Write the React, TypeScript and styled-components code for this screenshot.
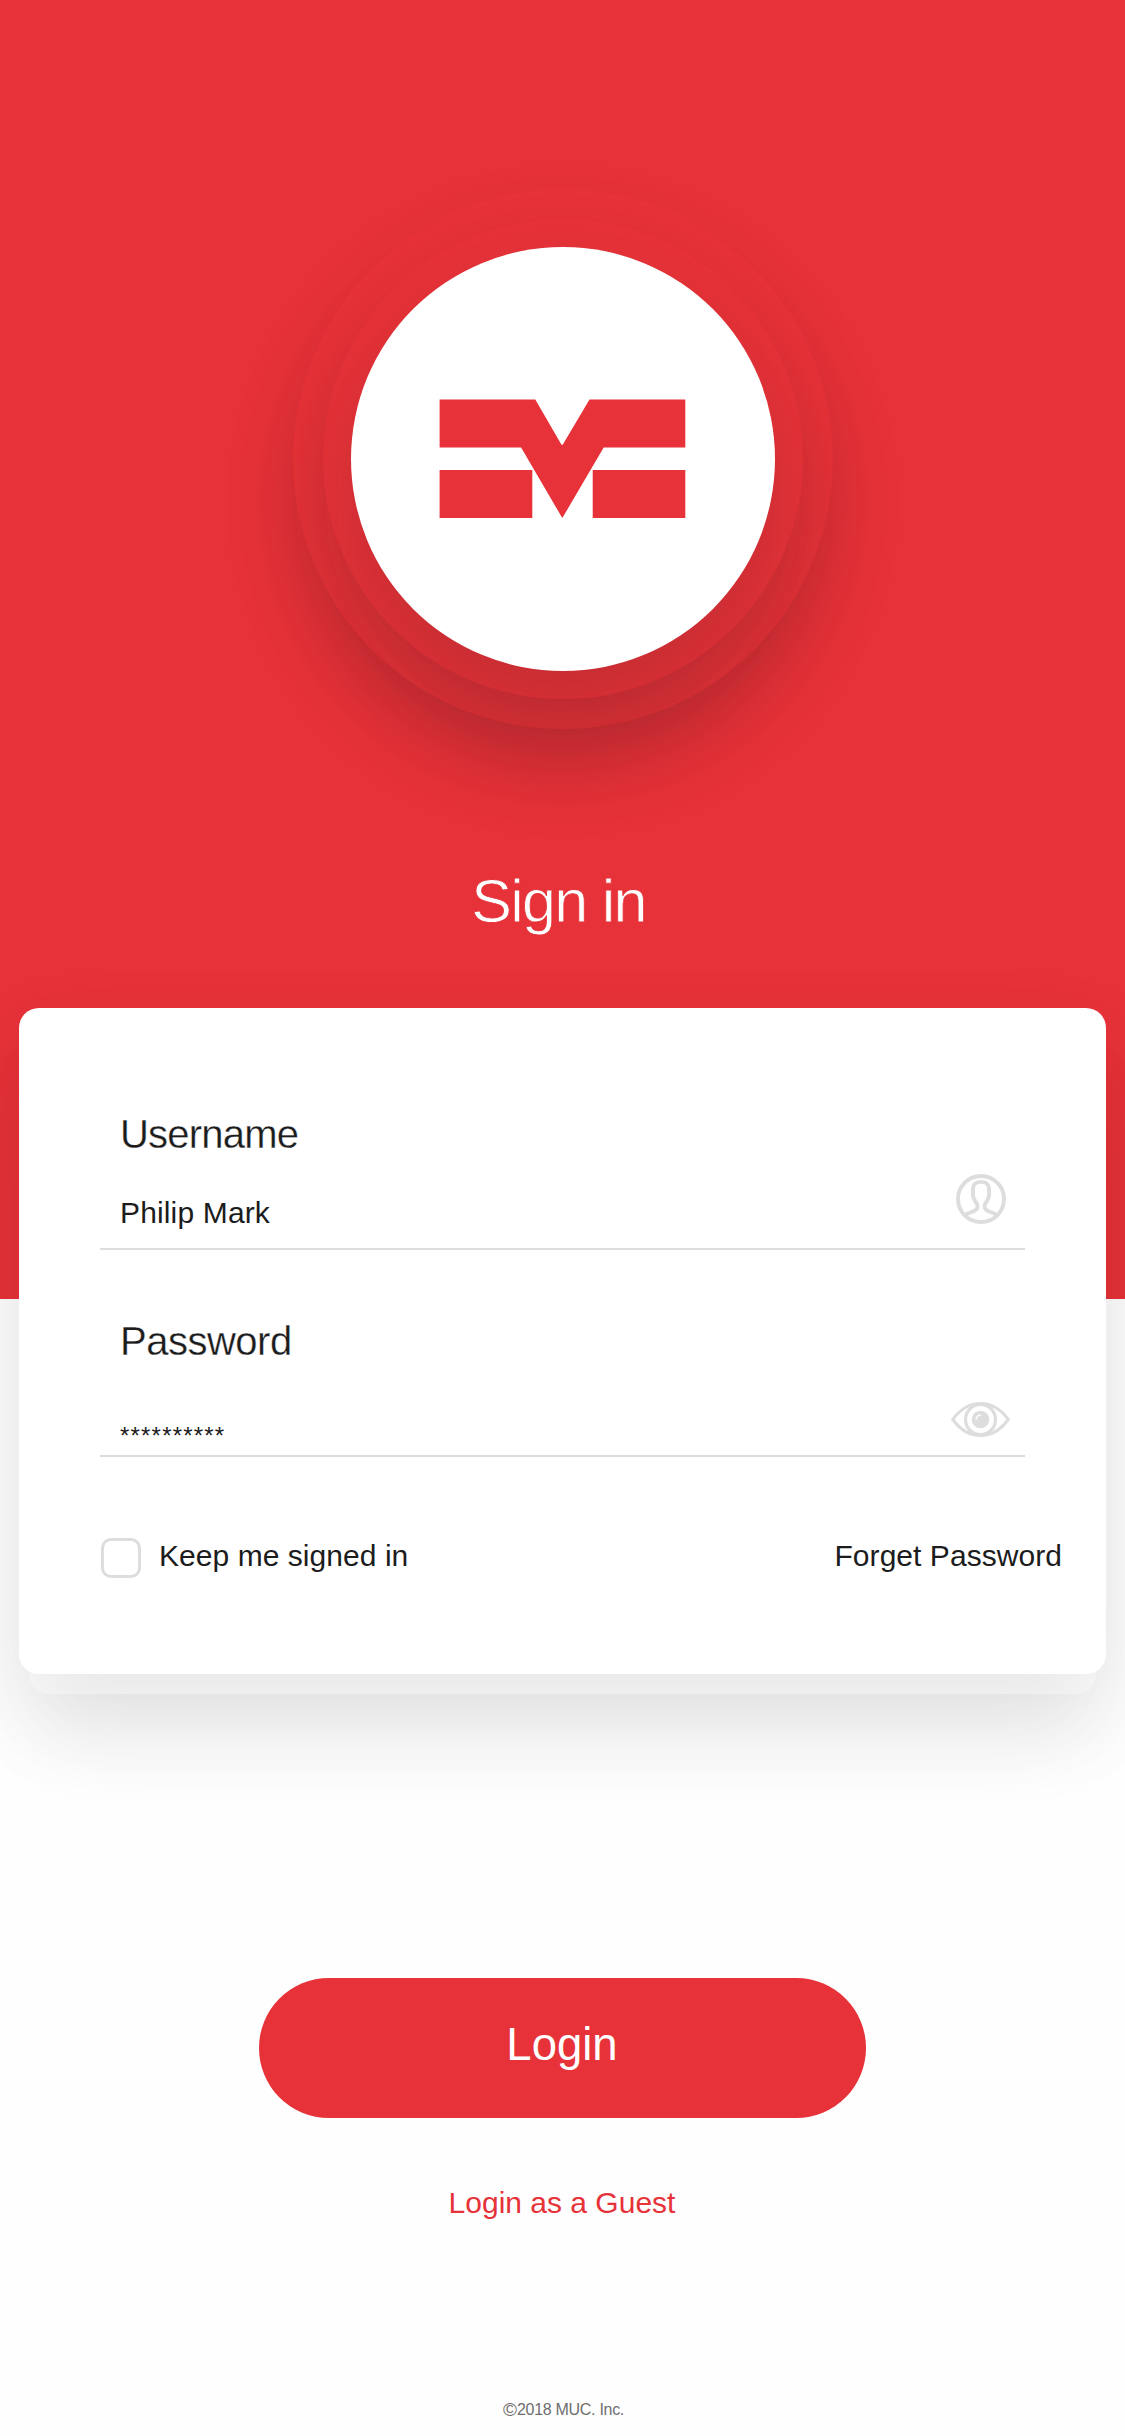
import React from 'react';
import styled, { createGlobalStyle } from 'styled-components';

const red = '#e63238';
const ink = '#1c1c1d';
const line = '#dddddd';

const GlobalStyle = createGlobalStyle`
  *, *::before, *::after { box-sizing: border-box; }
  html, body { margin: 0; padding: 0; background: #fefefe; }
  body { font-family: "Liberation Sans", Helvetica, Arial, sans-serif; color: ${ink}; }
  button { font-family: inherit; border: 0; padding: 0; background: none; cursor: pointer; }
`;

const Page = styled.main`
  width: 1125px;
  height: 2436px;
  margin: 0 auto;
  overflow: hidden;
  display: flex;
  flex-direction: column;
  align-items: center;
  background: #fefefe;
`;

const Hero = styled.header`
  width: 100%;
  height: 1299px;
  flex: none;
  padding-top: 189px;
  display: flex;
  flex-direction: column;
  align-items: center;
  background: ${red};
`;

const Ring = styled.div<{ $size: number; $fill: string; $shade: number }>`
  width: ${(p) => p.$size}px;
  height: ${(p) => p.$size}px;
  flex: none;
  display: grid;
  place-items: center;
  border-radius: 50%;
  background: ${(p) => p.$fill};
  box-shadow: 0 42px 80px rgba(16, 20, 26, ${(p) => p.$shade});
`;

const Title = styled.h1`
  margin: 137px 8px 0 0;
  font-size: 61px;
  line-height: 70px;
  font-weight: 400;
  letter-spacing: -1.7px;
  color: #fff;
  -webkit-text-stroke: 0.8px ${red};
`;

const Card = styled.section`
  position: relative;
  width: 1087px;
  height: 666px;
  flex: none;
  margin-top: -291px;
  padding: 102px 81px 0;
  border-radius: 20px;
  background: #fff;
  box-shadow: 0 40px 90px rgba(0, 0, 0, 0.095);
  z-index: 1;
`;

/* Second sheet peeking out from under the card */
const UnderSheet = styled.div`
  position: relative;
  width: 1067px;
  height: 666px;
  flex: none;
  margin-top: -646px;
  border-radius: 20px;
  background: #fefefe;
  box-shadow: 0 50px 90px rgba(0, 0, 0, 0.045);
`;

const Field = styled.div`
  height: 140px;
  margin-bottom: 67px;
  border-bottom: 2px solid ${line};
`;

const Label = styled.label<{ $spacing: number }>`
  display: block;
  padding-left: 20px;
  font-size: 40px;
  line-height: 48px;
  letter-spacing: ${(p) => p.$spacing}px;
  -webkit-text-stroke: 0.3px #fff;
`;

const ValueRow = styled.div`
  display: flex;
  justify-content: space-between;
  align-items: flex-start;
  padding-left: 20px;
`;

const Value = styled.span<{ $drop: number; $size: number; $spacing: number }>`
  margin-top: ${(p) => p.$drop}px;
  font-size: ${(p) => p.$size}px;
  line-height: 36px;
  letter-spacing: ${(p) => p.$spacing}px;
`;

const IconSlot = styled.span<{ $top: number; $right: number }>`
  display: flex;
  margin: ${(p) => p.$top}px ${(p) => p.$right}px 0 0;
  color: ${line};
`;

const Options = styled.div`
  display: flex;
  justify-content: space-between;
  align-items: flex-start;
  margin: 81px -37px 0 1px;
  font-size: 30px;
  line-height: 36px;
  letter-spacing: 0.05px;
`;

const Keep = styled.label`
  display: flex;
  gap: 18px;
`;

const Box = styled.span`
  width: 40px;
  height: 40px;
  border: 3px solid ${line};
  border-radius: 10px;
`;

const Forget = styled.a`
  color: inherit;
  text-decoration: none;
`;

const LoginButton = styled.button`
  width: 607px;
  height: 140px;
  flex: none;
  margin-top: 284px;
  padding: 0 1px 6px 0;
  border-radius: 70px;
  background: ${red};
  color: #fff;
  font-size: 45.5px;
  line-height: 54px;
`;

const Guest = styled.button`
  margin: 67px 1px 0 0;
  color: ${red};
  font-size: 30px;
  line-height: 36px;
`;

const Footer = styled.footer`
  display: flex;
  align-items: center;
  margin: 179px 0 0 2px;
  color: #6e6e6e;
  font-size: 16px;
  line-height: 20px;
  letter-spacing: -0.3px;
`;

const Mark = styled.span`
  font-size: 19px;
  letter-spacing: 0;
`;

const Logo = () => (
  <svg width="246" height="119" viewBox="0.7 0.9 246 119" overflow="visible" fill={red}>
    <path d="M.3.3H96L122.2 45.6H123.4L150.2.3H246V48.3H164.4L123 119 81.8 48.3H.3Z" />
    <path d="M.3 71H93V119H.3ZM153.4 71H246V119H153.4Z" />
  </svg>
);

const UserIcon = () => (
  <svg width="50" height="50" viewBox="0 0 50 50" fill="none" stroke="currentColor" strokeWidth="3.9">
    <circle cx="25" cy="25" r="23" />
    <path d="M9.5 41C13 38 21 37.6 21.3 33.6V30.5C18.7 27.6 18.4 24.8 17.6 23.9C16.6 21.5 16.8 17.5 17 14C17.4 10 20.8 7.9 25 7.9S32.6 10 33 14C33.2 17.5 33.4 21.5 32.4 23.9C31.6 24.8 31.3 27.6 28.7 30.5V33.6C29 37.6 37 38 40.5 41" />
  </svg>
);

const EyeIcon = () => (
  <svg width="59" height="35" viewBox="0 0 59 35" fill="none" stroke="currentColor">
    <path
      strokeWidth="3"
      d="M1.8 17.5C9.5 6.8 19 1.5 29.5 1.5S49.5 6.8 57.2 17.5C49.5 28.2 40 33.5 29.5 33.5S9.5 28.2 1.8 17.5Z"
    />
    <circle cx="29.5" cy="17.5" r="15" strokeWidth="3.2" />
    <circle cx="29.5" cy="17.5" r="8.8" fill="currentColor" stroke="none" />
    <path d="M25.2 17.6C25.2 15 27 13.1 30.2 12.9" stroke="#fff" strokeWidth="1.5" />
  </svg>
);

export default function App() {
  return (
    <>
      <GlobalStyle />
      <Page>
        <Hero>
          <Ring $size={540} $fill={red} $shade={0.11}>
            <Ring $size={480} $fill={red} $shade={0.11}>
              <Ring $size={424} $fill="#fff" $shade={0.15}>
                <Logo />
              </Ring>
            </Ring>
          </Ring>
          <Title>Sign in</Title>
        </Hero>
        <Card>
          <Field>
            <Label $spacing={-0.8}>Username</Label>
            <ValueRow>
              <Value $drop={37} $size={30} $spacing={0.15}>Philip Mark</Value>
              <IconSlot $top={16} $right={19}><UserIcon /></IconSlot>
            </ValueRow>
          </Field>
          <Field>
            <Label $spacing={-0.5}>Password</Label>
            <ValueRow>
              <Value $drop={53} $size={24} $spacing={1.2}>**********</Value>
              <IconSlot $top={37} $right={15}><EyeIcon /></IconSlot>
            </ValueRow>
          </Field>
          <Options>
            <Keep><Box />Keep me signed in</Keep>
            <Forget>Forget Password</Forget>
          </Options>
        </Card>
        <UnderSheet />
        <LoginButton>Login</LoginButton>
        <Guest>Login as a Guest</Guest>
        <Footer><Mark>©</Mark>2018 MUC. Inc.</Footer>
      </Page>
    </>
  );
}
